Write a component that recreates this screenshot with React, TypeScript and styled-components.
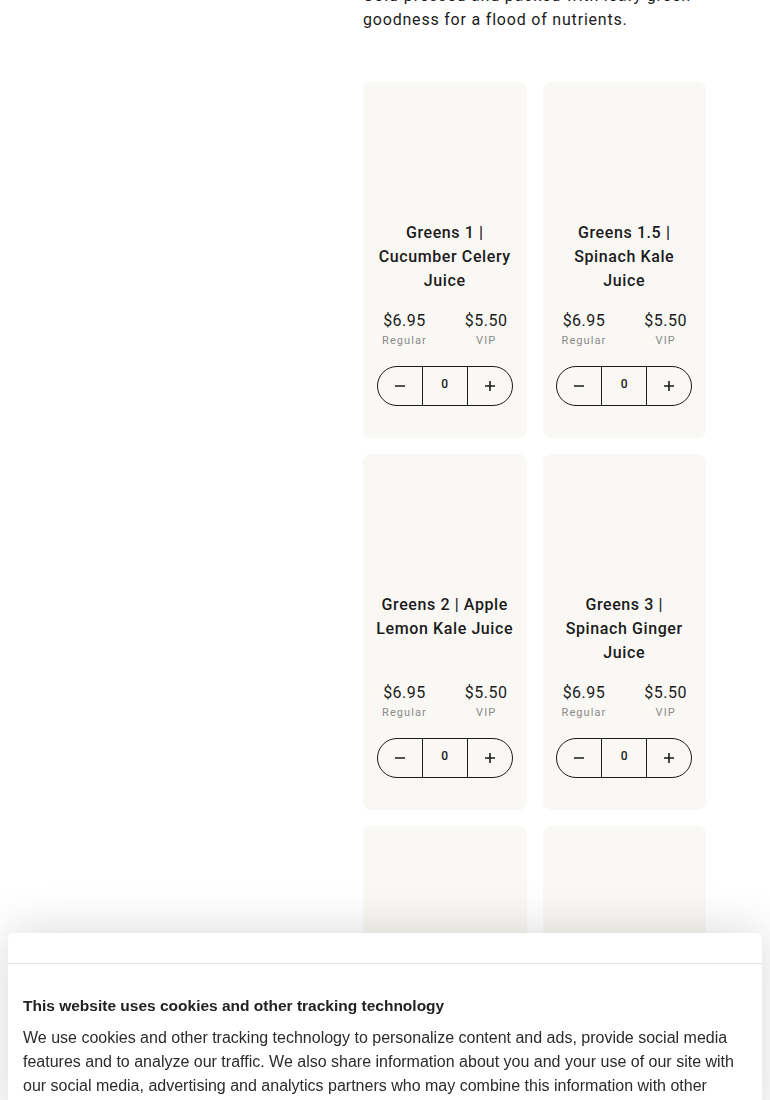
import React from 'react';
import styled, { createGlobalStyle } from 'styled-components';

const GlobalStyle = createGlobalStyle`
  html, body {
    margin: 0;
    padding: 0;
    background: #ffffff;
    overflow: hidden;
  }
  body {
    font-family: Roboto, 'Noto Sans', sans-serif;
    color: #1b1b1b;
  }
`;

const Page = styled.div`
  display: grid;
  grid-template-columns: 363px 343px;
  margin-top: -16px;
`;

const Side = styled.aside``;

const Main = styled.main`
  display: flex;
  flex-direction: column;
  gap: 50px;
`;

const Intro = styled.p`
  margin: 0;
  font-size: 16px;
  line-height: 24px;
  letter-spacing: 0.8px;
  color: #1b1b1b;
`;

const Grid = styled.div`
  display: grid;
  grid-template-columns: 1fr 1fr;
  gap: 16px;
`;

const Card = styled.div`
  background: #f9f8f5;
  border-radius: 8px;
  height: 356px;
  padding: 0 10px;
  box-sizing: border-box;
  display: flex;
  flex-direction: column;
  align-items: center;
`;

const ImageSlot = styled.div`
  height: 139px;
  align-self: stretch;
  flex-shrink: 0;
`;

const Name = styled.h3`
  margin: 0 0 17px;
  height: 72px;
  font-size: 16px;
  line-height: 24px;
  font-weight: 500;
  letter-spacing: 0.6px;
  text-align: center;
`;

const Prices = styled.div`
  display: flex;
  align-self: stretch;
  justify-content: space-between;
  padding: 0 9px;
  margin-bottom: 18px;
`;

const Price = styled.div`
  display: flex;
  flex-direction: column;
  align-items: center;
`;

const Amount = styled.span`
  font-size: 16px;
  line-height: 22px;
  letter-spacing: 0.5px;
  color: #1b1b1b;
`;

const Label = styled.span`
  margin-top: 2px;
  font-size: 11px;
  line-height: 14px;
  letter-spacing: 1.1px;
  color: #8a8a8a;
`;

const Stepper = styled.div`
  display: grid;
  grid-template-columns: 44px 46px 44px;
  width: 136px;
  height: 40px;
  border: 1px solid #1b1b1b;
  border-radius: 20px;
  box-sizing: border-box;
  overflow: hidden;
`;

const StepButton = styled.button`
  border: none;
  background: transparent;
  padding: 0;
  display: flex;
  align-items: center;
  justify-content: center;
  color: #1b1b1b;
  cursor: pointer;
`;

const Qty = styled.div`
  border-left: 1px solid #1b1b1b;
  border-right: 1px solid #1b1b1b;
  display: flex;
  align-items: flex-start;
  justify-content: center;
  padding-top: 9px;
  box-sizing: border-box;
  font-size: 12px;
  line-height: 16px;
  font-weight: 500;
`;

const Banner = styled.div`
  position: fixed;
  left: 8px;
  right: 8px;
  top: 933px;
  background: #ffffff;
  border-radius: 6px 6px 0 0;
  box-shadow: 0 0 50px rgba(0, 0, 0, 0.16);
  font-family: 'Liberation Sans', Arial, sans-serif;
`;

const BannerTop = styled.div`
  height: 30px;
  border-bottom: 1px solid #e2e2e2;
`;

const BannerBody = styled.div`
  padding: 31px 15px 0;
`;

const BannerTitle = styled.h2`
  margin: 0 0 9px;
  font-size: 15.5px;
  line-height: 22px;
  font-weight: 700;
  color: #222222;
`;

const BannerText = styled.p`
  margin: 0;
  font-size: 16px;
  line-height: 24px;
  color: #2b2b2b;
`;

const Minus = () => (
  <svg width="12" height="12" viewBox="0 0 12 12">
    <path d="M1 6h10" stroke="currentColor" strokeWidth="1.6" />
  </svg>
);

const Plus = () => (
  <svg width="12" height="12" viewBox="0 0 12 12">
    <path d="M1 6h10M6 1v10" stroke="currentColor" strokeWidth="1.6" />
  </svg>
);

const products = [
  { name: 'Greens 1 | Cucumber Celery Juice' },
  { name: 'Greens 1.5 | Spinach Kale Juice' },
  { name: 'Greens 2 | Apple Lemon Kale Juice' },
  { name: 'Greens 3 | Spinach Ginger Juice' },
  { name: 'Greens 4 | Kale Romaine Juice' },
  { name: 'Greens 5 | Celery Lemon Juice' },
];

export default function App() {
  return (
    <>
      <GlobalStyle />
      <Page>
        <Side />
        <Main>
          <Intro>
            Cold-pressed and packed with leafy green goodness for a flood of nutrients.
          </Intro>
          <Grid>
            {products.map((p) => (
              <Card key={p.name}>
                <ImageSlot />
                <Name>{p.name}</Name>
                <Prices>
                  <Price>
                    <Amount>$6.95</Amount>
                    <Label>Regular</Label>
                  </Price>
                  <Price>
                    <Amount>$5.50</Amount>
                    <Label>VIP</Label>
                  </Price>
                </Prices>
                <Stepper>
                  <StepButton aria-label="Decrease"><Minus /></StepButton>
                  <Qty>0</Qty>
                  <StepButton aria-label="Increase"><Plus /></StepButton>
                </Stepper>
              </Card>
            ))}
          </Grid>
        </Main>
      </Page>
      <Banner>
        <BannerTop />
        <BannerBody>
          <BannerTitle>This website uses cookies and other tracking technology</BannerTitle>
          <BannerText>
            We use cookies and other tracking technology to personalize content and ads, provide social media
            features and to analyze our traffic. We also share information about you and your use of our site with
            our social media, advertising and analytics partners who may combine this information with other
            information that you've provided to them or that they've collected from your use of their services.
          </BannerText>
        </BannerBody>
      </Banner>
    </>
  );
}
